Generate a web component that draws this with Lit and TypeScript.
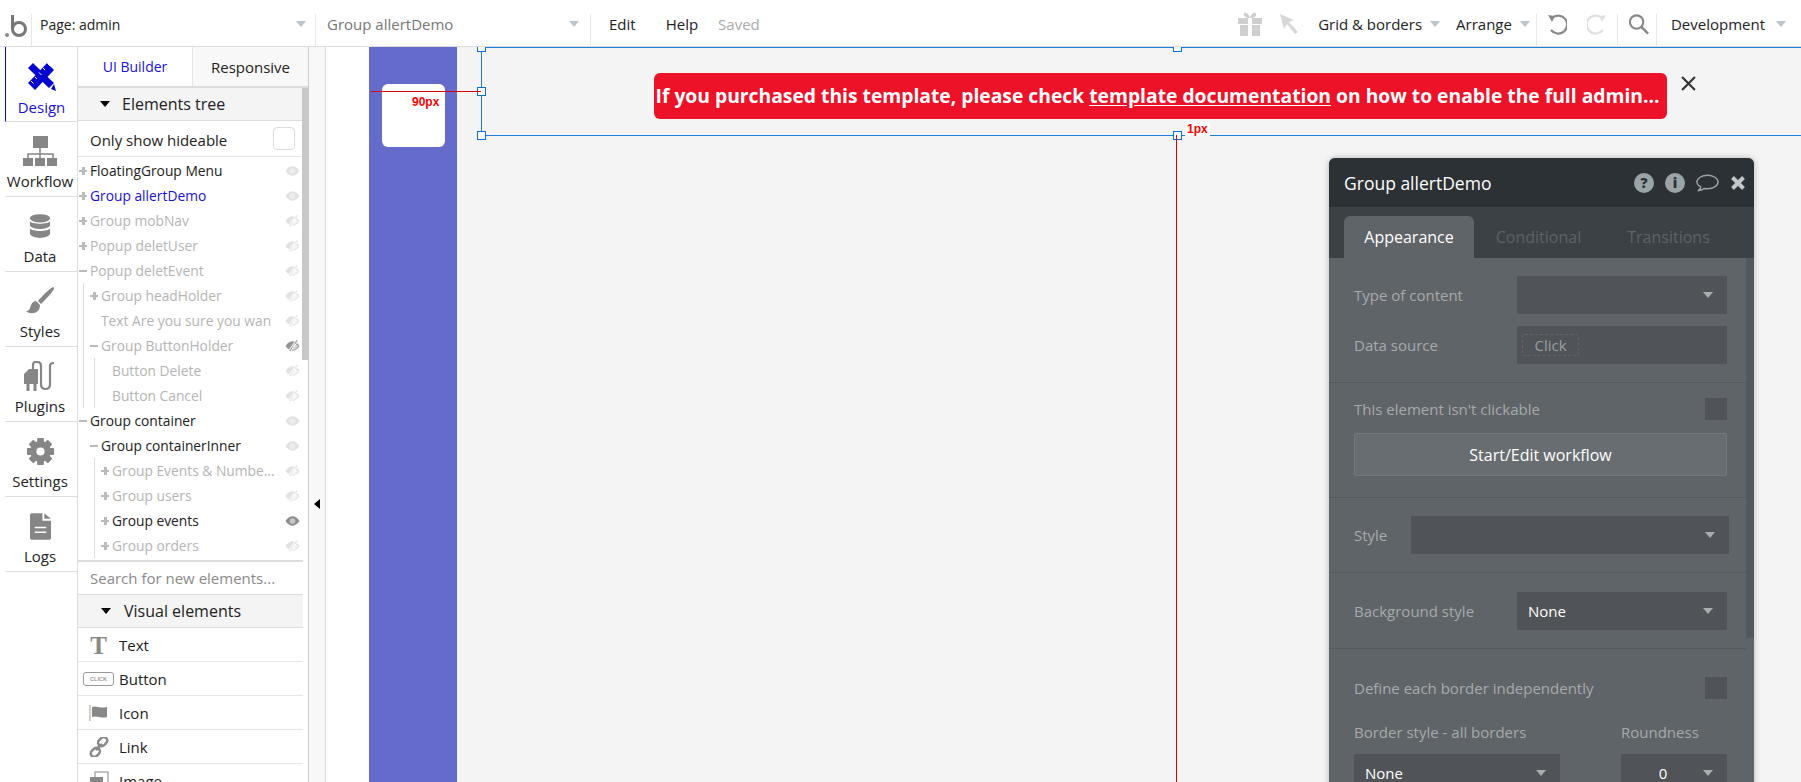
import { LitElement, html, svg, css } from "lit";
import { customElement } from "lit/decorators.js";

type Node = { t: string; s?: "on" | "dim" | "sel"; x?: "plus" | "minus"; eye?: "off" | "on" | "offdark" | "onfaint"; kids?: Node[]; noLine?: boolean };

const TREE: Node[] = [
  { t: "FloatingGroup Menu", s: "on", x: "plus", eye: "onfaint" },
  { t: "Group allertDemo", s: "sel", x: "plus", eye: "onfaint" },
  { t: "Group mobNav", s: "dim", x: "plus", eye: "off" },
  { t: "Popup deletUser", s: "dim", x: "plus", eye: "off" },
  {
    t: "Popup deletEvent", s: "dim", x: "minus", eye: "off",
    kids: [
      { t: "Group headHolder", s: "dim", x: "plus", eye: "off" },
      { t: "Text Are you sure you wan", s: "dim", eye: "off" },
      {
        t: "Group ButtonHolder", s: "dim", x: "minus", eye: "offdark",
        kids: [
          { t: "Button Delete", s: "dim", eye: "off" },
          { t: "Button Cancel", s: "dim", eye: "off" },
        ],
      },
    ],
  },
  {
    t: "Group container", s: "on", x: "minus", eye: "onfaint", noLine: true,
    kids: [
      {
        t: "Group containerInner", s: "on", x: "minus", eye: "onfaint",
        kids: [
          { t: "Group Events & Numbe...", s: "dim", x: "plus", eye: "off" },
          { t: "Group users", s: "dim", x: "plus", eye: "off" },
          { t: "Group events", s: "on", x: "plus", eye: "on" },
          { t: "Group orders", s: "dim", x: "plus", eye: "off" },
        ],
      },
    ],
  },
];

const eye = (k: string) => {
  const col = k === "on" ? "#8e8e8e" : k === "offdark" ? "#969696" : "#e2e2e2";
  const pupil = k === "on" ? "#c4c4c4" : "#ededed";
  const slash = k === "off" || k === "offdark";
  return html`<svg class="eye" viewBox="0 0 16 12" width="15" height="12">
    <path d="M0.5 6C3 2.400 5.500 1 8 1s5 1.400 7.500 5C13 9.600 10.500 11 8 11S3 9.600 .5 6z" fill="${col}"></path>
    <circle cx="8" cy="6" r="3" fill="${slash ? col : pupil}"></circle>
    ${slash
      ? svg`<path d="M13 0 4.500 12" stroke="#fff" stroke-width="3"></path><path d="M13 0 5 11.500" stroke="${col}" stroke-width="1.200"></path><path d="M9.500 3 14.500 6 10 10 7 10z" fill="#fff" opacity=".6"></path>`
      : ""}
  </svg>`;
};

const gear = (c: string) => html`<svg viewBox="0 0 30 30" width="29" height="29">
  <circle cx="15" cy="15" r="7.500" fill="none" stroke="${c}" stroke-width="6.500"></circle>
  ${[0, 45, 90, 135, 180, 225, 270, 315].map((a) => svg`<rect x="11.500" y="1" width="7" height="6" rx="1" fill="${c}" transform="rotate(${a} 15 15)"></rect>`)}
</svg>`;

const G = "#868686";
const B = "#0606d0";

const TABS = [
  {
    n: "Design", cls: "active",
    i: html`<svg viewBox="0 0 30 29" width="30" height="29">
      <path d="M4 9 1 6l5-5 3 3zM9 4l18 17-5 5L4 9z" fill="${B}"></path>
      <path d="M24 27l5 2-2-7z" fill="${B}"></path>
      <path d="M20 1l7 7-19 20-7-7z" fill="${B}"></path>
      <path d="M20.500 1.500l2.500 2.500M16 6l2 2M12 10.500l2.500 2.500M8 15l2 2M4 19l2.500 2.500" stroke="#fff" stroke-width="1"></path>
    </svg>`,
  },
  {
    n: "Workflow",
    i: html`<svg viewBox="0 0 34 30" width="34" height="30">
      <rect x="10" y="0" width="15" height="12" fill="${G}"></rect>
      <path d="M17 12v6M5 23v-5h25v5M17 18v5" stroke="${G}" stroke-width="1.500" fill="none"></path>
      <rect x="0" y="22" width="10" height="8" fill="${G}"></rect><rect x="12" y="22" width="10" height="8" fill="${G}"></rect><rect x="24" y="22" width="10" height="8" fill="${G}"></rect>
    </svg>`,
  },
  {
    n: "Data",
    i: html`<svg viewBox="0 0 24 28" width="22" height="27">
      <ellipse cx="12" cy="5" rx="11" ry="4.500" fill="${G}"></ellipse>
      <path d="M1 8c2 4 20 4 22 0v5c-2 5-20 5-22 0zM1 16c2 4 20 4 22 0v6c-2 6-20 6-22 0z" fill="${G}"></path>
    </svg>`,
  },
  {
    n: "Styles",
    i: html`<svg viewBox="0 0 30 30" width="30" height="30">
      <path d="M28 1c1 0 1 1 1 2-3 5-8 10-13 15l-3-3C17 10 23 4 28 1z" fill="${G}"></path>
      <path d="M11 15c-6 1-5 7-7 9-1 1-2 1-3 1 4 4 14 3 14-6z" fill="${G}"></path>
    </svg>`,
  },
  {
    n: "Plugins",
    i: html`<svg viewBox="0 0 32 30" width="32" height="30">
      <path d="M0 13l5-5h9v15h-1.500v7h-3v-7h-4v7h-3v-7H0z" fill="${G}"></path>
      <path d="M9 8V4q0-3 3-3h1q4 0 4 4v18q0 5 4.500 5t4.500-5V5q0-3 4-3" fill="none" stroke="${G}" stroke-width="2.200"></path>
    </svg>`,
  },
  { n: "Settings", i: gear(G) },
  {
    n: "Logs",
    i: html`<svg viewBox="0 0 22 28" width="21" height="27">
      <path d="M0 2c0-1 1-2 2-2h11v8h9v18c0 1-1 2-2 2H2c-1 0-2-1-2-2z" fill="${G}"></path>
      <path d="M15 0l7 6h-7z" fill="${G}"></path>
      <path d="M5 15h12M5 20h12" stroke="#fff" stroke-width="1.500"></path>
    </svg>`,
  },
];

@customElement("app-root")
export class AppRoot extends LitElement {
  static styles = css`
    :host { display: block; width: 1801px; height: 782px; overflow: hidden; background: #fff; font-family: "Open Sans", sans-serif; font-size: 14px; color: #222; }
    * { box-sizing: border-box; }
    .top { height: 47px; display: flex; align-items: stretch; border-bottom: 1px solid #ddd; background: #fff; }
    .sec { display: flex; align-items: center; border-right: 1px solid #e8e8e8; margin-top: 14px; height: 32px; padding-bottom: 12px; }
    .logo { width: 32px; padding-left: 5px; padding-bottom: 9px; }
    .page { width: 284px; padding-left: 8px; justify-content: space-between; padding-right: 9px; }
    .grp { width: 275px; padding-left: 11px; justify-content: space-between; padding-right: 11px; color: #777; font-size: 15px; }
    .arrow { width: 0; height: 0; border-left: 5.500px solid transparent; border-right: 5.500px solid transparent; border-top: 6px solid #bcc6cc; flex: none; }
    .menu { display: flex; align-items: center; padding: 2px 0 0 18px; gap: 30px; font-size: 15px; }
    .muted { color: #aaa; margin-left: -10px; }
    .spacer { flex: 1; }
    .rt { display: flex; align-items: center; padding-top: 2px; font-size: 15px; }
    .top > .rsec { display: flex; align-items: center; height: 32px; margin-top: 14px; border-right: 1px solid #e8e8e8; }
    .gift { margin-right: 16px; }
    .cursor { margin-right: 19px; }
    .gb { margin-right: 8px; }
    .ar { margin: 0 8px 0 16px; }
    .main { height: 735px; display: flex; }
    .side { width: 77px; padding-left: 5px; flex: none; font-size: 15px; }
    .tab { height: 75px; padding: 7px 2px 0 0; border-bottom: 1px solid #ddd; display: flex; flex-direction: column; align-items: center; }
    .tab.active { height: 75px; padding-right: 0; border-left: 1px solid #0606d0; color: #1a10d8; border-bottom-color: #ddd; }
    .tab .ic { height: 44px; display: flex; align-items: center; justify-content: center; }
    .tab .lb { line-height: 18px; margin-top: -1px; }
    .tab.active .lb { margin-top: 0; }
    .panel { width: 232px; flex: none; border-left: 1px solid #ddd; border-right: 1px solid #ccc; position: relative; }
    .ptabs { height: 41px; display: flex; border-bottom: 2px solid #ddd; }
    .ptabs div { display: flex; align-items: center; justify-content: center; }
    .ptabs .a { width: 115px; color: #1a10d8; border-right: 1px solid #e6e6e6; }
    .ptabs .b { flex: 1; background: #f8f8f8; font-size: 15px; }
    .inner { width: 225px; }
    .hd { height: 33px; background: #f4f4f4; border-bottom: 1px solid #ddd; display: flex; align-items: center; gap: 12px; padding-left: 22px; font-size: 16px; }
    .tri { width: 0; height: 0; border-left: 5.500px solid transparent; border-right: 5.500px solid transparent; border-top: 6px solid #000; }
    .only { height: 36px; display: flex; align-items: center; justify-content: space-between; padding: 2px 8px 0 12px; border-bottom: 1px solid #e6e6e6; font-size: 15px; }
    .cb { width: 22px; height: 23px; margin-top: -2px; border: 1px solid #ddd; border-radius: 4px; }
    .tree { height: 405px; overflow: hidden; border-bottom: 2px solid #ddd; font-size: 13.800px; padding-top: 1px; }
    .row { height: 25px; display: flex; align-items: center; padding-left: 1px; padding-right: 3px; white-space: nowrap; }
    .kids { margin-left: 5px; border-left: 1px solid #ddd; }
    .kids.nol { border-left-color: transparent; }
    .kids .row { padding-left: 6px; }
    .kids .kids { margin-left: 10px; }
    .pm { width: 8px; height: 8px; margin-right: 3px; flex: none; position: relative; }
    .pm::before { content: ""; position: absolute; left: 0; right: 0; top: 3px; height: 2.500px; background: #bbb; }
    .pm.plus::after { content: ""; position: absolute; top: 0; bottom: 0; left: 3px; width: 2.500px; background: #bbb; }
    .on { color: #222; } .dim { color: #b5b5b5; } .sel { color: #1a10d8; }
    .name { flex: 1; }
    .eye { flex: none; }
    .search { height: 33px; display: flex; align-items: center; padding-left: 12px; color: #8a8a8a; border-bottom: 1px solid #ddd; font-size: 15px; }
    .hd.v { gap: 13px; padding-left: 23px; }
    .el { height: 34px; display: flex; align-items: center; border-bottom: 1px solid #e6e6e6; font-size: 15px; padding-top: 1px; }
    .el .eic { width: 41px; display: flex; justify-content: center; flex: none; }
    .clickbox { width: 31px; height: 14px; border: 1.500px solid #999; border-radius: 3px; font: bold 5.500px "Liberation Sans", sans-serif; color: #999; display: flex; align-items: center; justify-content: center; }
    .tt { font: bold 25px/25px "Liberation Serif", serif; color: #888; }
    .canvas { flex: 1; position: relative; overflow: hidden; background: #f4f4f4; }
    .strip { position: absolute; left: 0; top: 0; bottom: 0; width: 17px; background: #f8f8f8; border-right: 1px solid #ddd; }
    .white { position: absolute; left: 17px; top: 0; bottom: 0; width: 43px; background: #fff; }
    .purple { position: absolute; left: 60px; top: 0; bottom: 0; width: 88px; background: #656bca; }
    .card { position: absolute; left: 73px; top: 37px; width: 63px; height: 63px; background: #fff; border-radius: 6px; }
    .coll { position: absolute; left: 5px; top: 452px; width: 0; height: 0; border-top: 5.500px solid transparent; border-bottom: 5.500px solid transparent; border-right: 6px solid #000; }
    .sel-box { position: absolute; left: 172px; top: 0; width: 1700px; height: 89px; border: 1px solid #1a7fe0; }
    .h { position: absolute; width: 9px; height: 9px; background: #fff; border: 1px solid #0d6ee0; }
    .redh { position: absolute; left: 62px; top: 44px; width: 110px; height: 1px; background: #d80000; }
    .redv { position: absolute; left: 867px; top: 88px; bottom: 0; width: 1px; background: #e60000; }
    .px90 { position: absolute; left: 103px; top: 48px; font: bold 12px/14px "Liberation Sans", sans-serif; color: #f00; }
    .px1 { position: absolute; left: 876px; top: 75px; background: #fff; padding: 0 2px; height: 14px; font: bold 12px/14px "Liberation Sans", sans-serif; color: #f00; }
    .alert { position: absolute; left: 345px; top: 26px; width: 1013px; height: 46px; padding: 0 6px 2px 0; background: #ee1228; border-radius: 6px; color: #fff; font-weight: 700; font-size: 19.300px; display: flex; align-items: center; justify-content: center; white-space: nowrap; }
    .alert u { text-underline-offset: 2px; }
    .x { position: absolute; left: 1372px; top: 29px; }
    .pp { position: absolute; left: 1020px; top: 111px; width: 425px; height: 640px; border-radius: 6px 6px 0 0; background: #5f6468; box-shadow: 0 0 6px rgba(0,0,0,.25); color: #a6aaac; overflow: hidden; font-size: 15px; }
    .pph { height: 49px; background: #2b3134; display: flex; align-items: center; padding: 0 8px 0 15px; color: #fff; font-size: 17.500px; }
    .pph .ti { flex: 1; }
    .pph .ics { display: flex; align-items: center; gap: 11px; }
    .pptabs { height: 51px; background: #3b4145; display: flex; padding: 9px 0 0 15px; color: #5d6367; font-size: 16px; }
    .pptabs > div { display: flex; align-items: center; justify-content: center; }
    .pptabs .act { width: 130px; background: #5f6468; color: #fff; border-radius: 6px 6px 0 0; }
    .pptabs .c { margin-left: 21px; width: 87px; }
    .pptabs .t { margin-left: 45px; width: 83px; }
    .thumb { position: absolute; right: 0; top: 100px; width: 8px; height: 380px; background: #53585c; }
    .s { width: 417px; border-bottom: 1px solid #54595d; padding: 0 19px 0 25px; }
    .s1 { height: 125px; padding-top: 18px; display: flex; flex-direction: column; gap: 12px; }
    .s2 { height: 115px; padding-top: 15px; }
    .s3 { height: 75px; padding-top: 18px; }
    .s4 { height: 76px; padding-top: 19px; }
    .s5 { padding-top: 28px; border-bottom: 0; }
    .fr { display: flex; align-items: center; justify-content: space-between; }
    .f { background: #505458; display: flex; align-items: center; justify-content: space-between; padding: 0 14px 0 11px; color: #fff; border-radius: 1px; }
    .f.w { width: 210px; height: 38px; }
    .arr { width: 0; height: 0; border-left: 5.500px solid transparent; border-right: 5.500px solid transparent; border-top: 6px solid #a9adaf; margin-left: auto; }
    .chip { border: 1px dashed #5f6468; border-radius: 3px; height: 22px; width: 57px; margin-left: -6px; display: flex; align-items: center; justify-content: center; color: #989c9e; }
    .box { width: 22px; height: 22px; background: #505458; }
    .btn { height: 43px; margin-top: 13px; background: #686d71; border: 1px solid #73787b; border-radius: 2px; color: #fff; font-size: 16px; display: flex; align-items: center; justify-content: center; }
    .f.st { width: 318px; height: 38px; margin-right: -2px; }
    .cols { display: flex; justify-content: space-between; margin-top: 22px; }
    .cols .lab { height: 22px; line-height: 22px; margin-bottom: 11px; }
    .f.l { width: 206px; height: 38px; }
    .f.r { width: 106px; height: 38px; }
    .center { flex: 1; text-align: center; padding-right: 9px; }
  `;

  private rows(nodes: Node[]): unknown {
    return nodes.map(
      (n) => html`<div class="row ${n.s}">
          ${n.x ? html`<span class="pm ${n.x}"></span>` : html`<span class="pm" style="visibility:hidden"></span>`}
          <span class="name">${n.t}</span>${eye(n.eye || "off")}
        </div>
        ${n.kids ? html`<div class="kids ${n.noLine ? "nol" : ""}">${this.rows(n.kids)}</div>` : ""}`
    );
  }

  render() {
    return html`
      <div class="top">
        <div class="sec logo">
          <svg viewBox="0 0 23 24" width="23" height="24">
            <circle cx="2" cy="21" r="2" fill="#8a8a8a"></circle>
            <path d="M7.500 1v14" stroke="#777" stroke-width="3"></path>
            <circle cx="14" cy="15" r="6.500" fill="none" stroke="#777" stroke-width="3"></circle>
          </svg>
        </div>
        <div class="sec page"><span>Page: admin</span><span class="arrow"></span></div>
        <div class="sec grp"><span>Group allertDemo</span><span class="arrow"></span></div>
        <div class="menu"><span>Edit</span><span>Help</span><span class="muted">Saved</span></div>
        <div class="spacer"></div>
        <div class="rt">
          <svg class="gift" viewBox="0 0 26 24" width="26" height="24">
            <path d="M1 6h24v6H1zM3 13h20v11H3z" fill="#cfcfcf"></path>
            <path d="M11 6h4v18h-4z" fill="#fff"></path>
            <path d="M13 6C9 6 6 4 7 1c2-1 5 1 6 5 1-4 4-6 6-5 1 3-2 5-6 5z" fill="#cfcfcf"></path>
          </svg>
          <svg class="cursor" viewBox="0 0 20 22" width="20" height="22">
            <path d="M1 1l14 6-5 2 9 10-3 2-8-10-3 5z" fill="#d8d8d8"></path>
          </svg>
          <span class="gb">Grid &amp; borders</span><span class="arrow"></span>
          <span class="ar">Arrange</span><span class="arrow"></span>
        </div>
        <div class="rsec" style="margin-left:6px;width:0"></div>
        <div class="rt" style="gap:20px;padding-left:10px;padding-right:10px">
          <svg viewBox="0 0 20 22" width="20" height="22"><path d="M5 5a9 9 0 1 1-1 12" fill="none" stroke="#888" stroke-width="2.200"></path><path d="M1 2l7 1-3 6z" fill="#888"></path></svg>
          <svg viewBox="0 0 20 22" width="20" height="22"><path d="M15 5a9 9 0 1 0 1 12" fill="none" stroke="#e0e0e0" stroke-width="2.200"></path><path d="M19 2l-7 1 3 6z" fill="#e0e0e0"></path></svg>
        </div>
        <div class="rsec" style="width:0"></div>
        <div class="rt" style="padding-left:10px;padding-right:7px">
          <svg viewBox="0 0 22 22" width="21" height="22"><circle cx="9" cy="9" r="7" fill="none" stroke="#888" stroke-width="2.200"></circle><path d="M14 14l7 7" stroke="#888" stroke-width="2.500"></path></svg>
        </div>
        <div class="rsec" style="width:0"></div>
        <div class="rt" style="padding-left:14px;padding-right:15px;gap:11px"><span>Development</span><span class="arrow"></span></div>
      </div>
      <div class="main">
        <div class="side">
          ${TABS.map((t) => html`<div class="tab ${t.cls || ""}"><div class="ic">${t.i}</div><div class="lb">${t.n}</div></div>`)}
        </div>
        <div class="panel">
          <div class="ptabs"><div class="a">UI Builder</div><div class="b">Responsive</div></div>
          <div class="inner">
            <div class="hd"><span class="tri"></span><span>Elements tree</span></div>
            <div class="only"><span>Only show hideable</span><span class="cb"></span></div>
            <div class="tree">${this.rows(TREE)}</div>
            <div class="search">Search for new elements...</div>
            <div class="hd v"><span class="tri"></span><span>Visual elements</span></div>
            <div class="el"><div class="eic"><span class="tt">T</span></div><span>Text</span></div>
            <div class="el"><div class="eic"><span class="clickbox">CLICK</span></div><span>Button</span></div>
            <div class="el"><div class="eic">
              <svg viewBox="0 0 20 16" width="20" height="16"><path d="M1 0v16" stroke="#aa9988" stroke-width="1"></path><path d="M3 2c5-2 7 2 15 0v10c-6 2-10-2-15 0z" fill="#888"></path></svg>
            </div><span>Icon</span></div>
            <div class="el"><div class="eic">
              <svg viewBox="0 0 20 20" width="20" height="20"><g fill="none" stroke="#888" stroke-width="2.500"><rect x="9" y="1" width="10" height="7" rx="3.500" transform="rotate(-45 14 5)"></rect><rect x="1" y="12" width="10" height="7" rx="3.500" transform="rotate(-45 6 15)"></rect><path d="M7 13l6-6"></path></g></svg>
            </div><span>Link</span></div>
            <div class="el"><div class="eic">
              <svg viewBox="0 0 20 20" width="20" height="20"><rect x="6" y="1" width="13" height="13" fill="none" stroke="#888"></rect><rect x="1" y="6" width="13" height="13" fill="#888"></rect></svg>
            </div><span>Image</span></div>
          </div>
          <div style="position:absolute;right:0;top:41px;width:6px;height:272px;background:#c8c8c8"></div>
        </div>
        <div class="canvas">
          <div class="strip"></div>
          <div class="white"></div>
          <div class="purple"></div>
          <div class="card"></div>
          <div class="coll"></div>
          <div class="sel-box"></div>
          <div class="h" style="left:168px;top:-4px"></div>
          <div class="h" style="left:864px;top:-4px"></div>
          <div class="h" style="left:168px;top:40px"></div>
          <div class="h" style="left:168px;top:84px"></div>
          <div class="h" style="left:864px;top:84px"></div>
          <div class="redh"></div>
          <div class="redv"></div>
          <div class="px90">90px</div>
          <div class="px1">1px</div>
          <div class="alert"><span>If you purchased this template, please check <u>template documentation</u> on how to enable the full admin...</span></div>
          <svg class="x" viewBox="0 0 14 14" width="15" height="15"><path d="M1 1l12 12M13 1 1 13" stroke="#333" stroke-width="2"></path></svg>
          <div class="pp">
            <div class="pph">
              <span class="ti">Group allertDemo</span>
              <div class="ics">
                <svg viewBox="0 0 20 20" width="20" height="20"><circle cx="10" cy="10" r="10" fill="#9aa3a6"></circle><text x="10" y="15" text-anchor="middle" font-family="Open Sans" font-weight="800" font-size="14" fill="#2b3134">?</text></svg>
                <svg viewBox="0 0 20 20" width="20" height="20"><circle cx="10" cy="10" r="10" fill="#9aa3a6"></circle><text x="10" y="15" text-anchor="middle" font-family="Open Sans" font-weight="800" font-size="14" fill="#2b3134">i</text></svg>
                <svg viewBox="0 0 24 20" width="23" height="20"><path d="M12 2c6 0 11 3 11 7s-5 7-11 7c-1 0-2 0-3-.3C7 17 5 18 2 18c2-1 3-3 3-4-2-1-4-3-4-5 0-4 5-7 11-7z" fill="none" stroke="#9aa3a6" stroke-width="1.500"></path></svg>
                <svg viewBox="0 0 16 16" width="16" height="16"><path d="M2.500 2.500l11 11M13.500 2.500l-11 11" stroke="#c2c8ca" stroke-width="4"></path></svg>
              </div>
            </div>
            <div class="pptabs"><div class="act">Appearance</div><div class="c">Conditional</div><div class="t">Transitions</div></div>
            <div class="thumb"></div>
            <div class="s s1">
              <div class="fr"><span>Type of content</span><div class="f w"><span class="arr"></span></div></div>
              <div class="fr"><span>Data source</span><div class="f w"><span class="chip">Click</span></div></div>
            </div>
            <div class="s s2">
              <div class="fr"><span>This element isn't clickable</span><span class="box"></span></div>
              <div class="btn">Start/Edit workflow</div>
            </div>
            <div class="s s3">
              <div class="fr"><span>Style</span><div class="f st"><span class="arr"></span></div></div>
            </div>
            <div class="s s4">
              <div class="fr"><span>Background style</span><div class="f w"><span>None</span><span class="arr"></span></div></div>
            </div>
            <div class="s s5">
              <div class="fr"><span>Define each border independently</span><span class="box"></span></div>
              <div class="cols">
                <div><div class="lab">Border style - all borders</div><div class="f l"><span>None</span><span class="arr"></span></div></div>
                <div><div class="lab">Roundness</div><div class="f r"><span class="center">0</span><span class="arr" style="margin-left:0"></span></div></div>
              </div>
            </div>
          </div>
        </div>
      </div>
    `;
  }
}
